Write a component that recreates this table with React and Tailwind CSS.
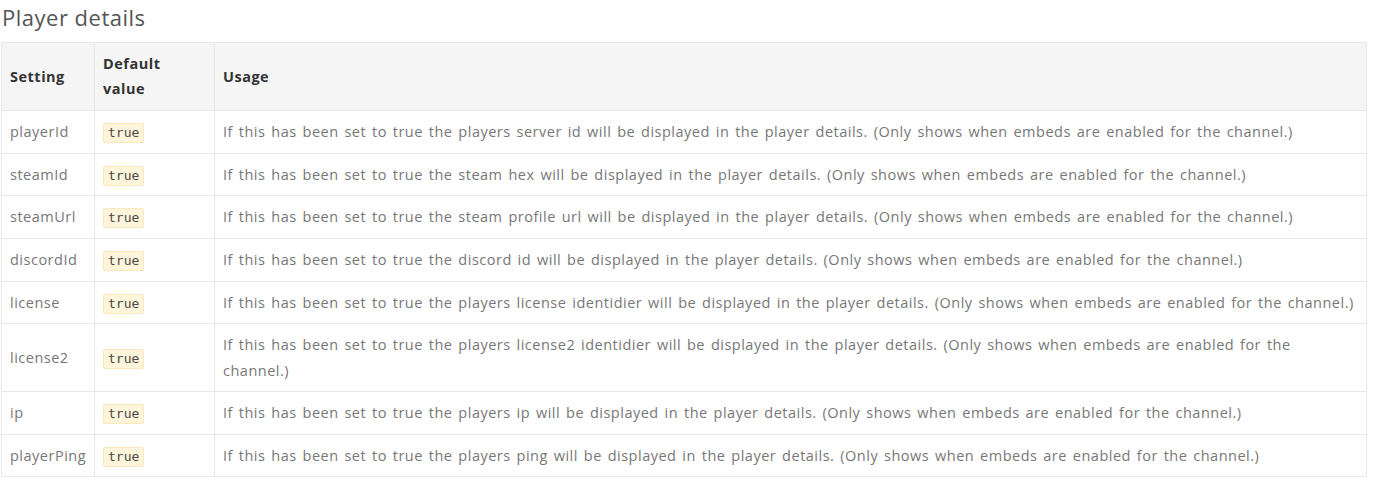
import React from "react";

const rows = [
  ["playerId", "If this has been set to true the players server id will be displayed in the player details. (Only shows when embeds are enabled for the channel.)"],
  ["steamId", "If this has been set to true the steam hex will be displayed in the player details. (Only shows when embeds are enabled for the channel.)"],
  ["steamUrl", "If this has been set to true the steam profile url will be displayed in the player details. (Only shows when embeds are enabled for the channel.)"],
  ["discordId", "If this has been set to true the discord id will be displayed in the player details. (Only shows when embeds are enabled for the channel.)"],
  ["license", "If this has been set to true the players license identidier will be displayed in the player details. (Only shows when embeds are enabled for the channel.)"],
  ["license2", "If this has been set to true the players license2 identidier will be displayed in the player details. (Only shows when embeds are enabled for the channel.)"],
  ["ip", "If this has been set to true the players ip will be displayed in the player details. (Only shows when embeds are enabled for the channel.)"],
  ["playerPing", "If this has been set to true the players ping will be displayed in the player details. (Only shows when embeds are enabled for the channel.)"],
];

const App = () => {
  return (
    <div className="bg-white w-[1375px] h-[482px] overflow-hidden" style={{ fontFamily: '"Open Sans", sans-serif' }}>
      <h2 className="pl-[2px] pt-[2px] h-[42px] text-[22px] leading-[30px] tracking-[0.5px] text-[#555]">Player details</h2>
      <table className="ml-px w-[1366px] table-fixed border-collapse text-[14.5px] leading-[25.33px] tracking-[0.5px] [word-spacing:1.6px]">
        <colgroup>
          <col className="w-[93px]" />
          <col className="w-[120px]" />
          <col />
        </colgroup>
        <thead>
          <tr className="bg-[#f5f5f5] text-[#333] font-bold text-left">
            <th className="border border-[#e8e8e8] px-[8px] py-[8.17px] align-middle">Setting</th>
            <th className="border border-[#e8e8e8] px-[8px] py-[8.17px] align-middle">Default value</th>
            <th className="border border-[#e8e8e8] px-[8px] py-[8.17px] align-middle">Usage</th>
          </tr>
        </thead>
        <tbody>
          {rows.map(([name, usage]) => (
            <tr key={name} className="text-[#777]">
              <td className="border border-[#e8e8e8] px-[8px] py-[8.17px] align-middle whitespace-nowrap">{name}</td>
              <td className="border border-[#e8e8e8] px-[8px] py-[8.17px] align-middle">
                <code className="inline-block rounded-[2px] border border-[#fbe8bd] bg-[#fff5da] px-[4px] text-[13px] leading-[18px] tracking-normal [word-spacing:0px] text-[#4a4a4a]" style={{ fontFamily: '"DejaVu Sans Mono", monospace' }}>true</code>
              </td>
              <td className="border border-[#e8e8e8] pl-[8px] pr-[9px] py-[8.17px] align-middle">{usage}</td>
            </tr>
          ))}
        </tbody>
      </table>
    </div>
  );
};

export default App;
